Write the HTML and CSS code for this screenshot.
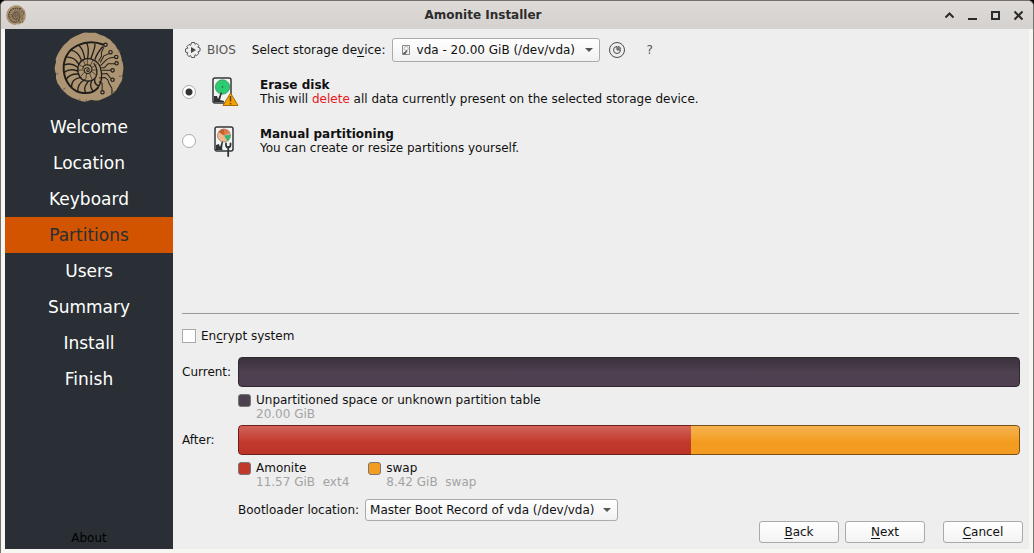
FILE: index.html
```html
<!DOCTYPE html>
<html lang="en">
<head>
<meta charset="utf-8">
<title>Amonite Installer</title>
<link rel="stylesheet" href="styles.css">
</head>
<body>
<div class="window">
  <header class="titlebar">
    <svg class="app-icon" viewBox="12 12 208 208" aria-hidden="true"><use href="#ammonite"/></svg>
    <h1 class="window-title">Amonite Installer</h1>
    <div class="window-controls">
      <button class="wc" aria-label="Roll up"><svg viewBox="0 0 11 11"><path d="M1.5 7.500 5.500 3.500 9.500 7.500"/></svg></button>
      <button class="wc" aria-label="Minimize"><svg viewBox="0 0 11 11"><path d="M1 9h9"/></svg></button>
      <button class="wc" aria-label="Maximize"><svg viewBox="0 0 11 11"><path d="M2 2h7v7H2z"/></svg></button>
      <button class="wc" aria-label="Close"><svg viewBox="0 0 11 11"><path d="M1.500 1.500l8 8M9.500 1.500l-8 8"/></svg></button>
    </div>
  </header>
  <div class="body">
    <aside class="sidebar">
      <svg class="logo" viewBox="12 12 208 208" aria-hidden="true">
        <g id="ammonite">
          <path fill="#ad9472" d="M92 17Q103 12 114 14L135 14Q143 16 150 21 162 22 170 30 180 34 186 43 195 49 199 60 208 68 210 80 213 88 213 95 219 106 218 125L215 143Q217 155 208 166 203 176 196 186 186 198 174 203 162 209 147 215 135 217 123 213L105 219Q96 219 86 215 76 210 66 207 53 202 44 191 35 184 29 173 20 163 18 150V137Q14 128 14 118 15 110 18 102 15 90 22 80 27 71 33 62 38 51 50 43 60 31 72 26 82 22 92 17z"/>
          <path fill="none" stroke="#786249" stroke-width="3" d="M18 137l7-2M38 184l8-6M105 219l4-7M190 191l-5-5M213 143l-8 1M209 69l-7 3M88 216l1-6"/>
          <g fill="none" stroke="#211f1b" stroke-linecap="round" stroke-linejoin="round">
            <path stroke-width="6" d="M160 50C138 42 108 40 84 51 54 64 38 92 41 127 44 160 66 190 98 193 116 195 132 190 142 178"/>
            <path stroke-width="4" d="M142 178C154 162 156 138 150 118 144 98 116 84 98 95 80 106 79 131 89 146 101 162 126 162 136 146 143 134 139 116 131 106"/>
            <path stroke-width="3" d="M98 121C99 107 119 105 124 118 128 131 115 139 105 133 97 126 105 115 114 119 120 124 116 131 111 129 108 127 110 124 112 124"/>
            <path stroke-width="4" d="M156 56C148 66 139 76 134 93M134 48C134 65 126 76 122 90M109 45C117 58 114 76 112 90M86 52C96 60 101 75 103 92M62 66C80 69 90 85 94 98M47 87C65 85 78 95 85 107M42 110C58 104 71 108 82 117M42 132C56 122 70 123 82 128M48 153C57 138 72 136 86 137M64 175C64 157 77 149 92 147M83 188C80 171 92 161 102 154M106 192C98 177 108 168 114 158M128 187C117 176 121 164 124 157M145 172C132 168 132 158 133 151"/>
            <path stroke-width="2" d="M111 110V93M120 112l8-16M126 117l11-7M127 125h13M126 131l12 9M118 135l7 18M109 135l-3 18M102 132l-11 12M98 125H83M99 116l-14-8M105 111l-6-15"/>
            <path stroke-width="3" d="M145 98L153 84V73L160 57M150 102L160 83 174 77M151 111L168 94 178 89 191 87M154 118H162L173 106H193M155 126H181M153 137L169 135 181 150M147 149L163 147 172 154 176 166 184 179V196M146 160L155 164V186"/>
          </g>
          <g fill="#ad9472" stroke="#211f1b" stroke-width="3.500"><circle cx="165" cy="50" r="5"/><circle cx="180" cy="72" r="5"/><circle cx="197" cy="86" r="5"/><circle cx="198" cy="105" r="5"/><circle cx="186" cy="126" r="5"/><circle cx="186" cy="154" r="5"/><circle cx="156" cy="191" r="5"/></g>
        </g>
      </svg>
      <ol class="steps">
        <li class="step">Welcome</li>
        <li class="step">Location</li>
        <li class="step">Keyboard</li>
        <li class="step current" aria-current="step">Partitions</li>
        <li class="step">Users</li>
        <li class="step">Summary</li>
        <li class="step">Install</li>
        <li class="step">Finish</li>
      </ol>
      <button class="about">About</button>
    </aside>
    <main class="content">
      <section class="page">
        <div class="device-row">
          <svg class="tool-icon" viewBox="0 0 18 18" aria-hidden="true"><path fill="none" stroke="#555" stroke-linejoin="round" d="M7.500 1h3l.5 1.800 1.700-.9 2.100 2.100-.9 1.700 2.100.8v3l-2.100.8.900 1.700-2.100 2.100-1.700-.9L10.500 16h-3l-.8-1.900-1.700.9L2.900 13l.9-1.700L1.500 10.500v-3l2.300-.8L2.900 5 5 2.900l1.700.9z" transform="translate(0 .5)"/><path fill="#444" d="M7 6v6l5-3z"/></svg>
          <span class="bios">BIOS</span>
          <label class="device-label" for="device">Select storage de<u>v</u>ice:</label>
          <div class="select-box device-box">
            <svg class="disk-icon" viewBox="0 0 10 12" aria-hidden="true"><path fill="#f7f7f7" stroke="#888" d="M1.500 1.500h7v9h-7z"/><circle cx="5.200" cy="4.500" r="2" fill="none" stroke="#aaa" stroke-width=".8"/><path stroke="#666" stroke-width="1.500" d="M2 9.500h2l2-3"/></svg>
            <select class="select device-select" id="device"><option>vda - 20.00 GiB (/dev/vda)</option></select>
          </div>
          <button class="icon-button" aria-label="Partition table"><svg class="tool-icon" viewBox="0 0 18 18"><g fill="none" stroke="#4c4c4c"><circle cx="9" cy="9" r="7.500"/><path d="M9 5.500A3.500 3.500 0 1 0 12.500 9H9z"/><path d="M10 5.500q2.500 0 2.500 2.500H10z"/></g></svg></button>
          <button class="icon-button help" aria-label="Help">?</button>
        </div>

        <div class="choice">
          <input class="radio" type="radio" name="mode" id="erase" checked>
          <svg class="choice-icon" viewBox="0 0 30 32" aria-hidden="true">
            <rect x="3" y="2" width="18" height="25" rx="2" fill="#f3f5f4" stroke="#343638" stroke-width="1.500"/>
            <circle cx="12.500" cy="11" r="7.200" fill="#2ecc71" stroke="#248b51" stroke-width=".7"/><circle cx="12.500" cy="11" r=".8" fill="#255e3d"/>
            <path fill="#303336" d="M4 20h3l1 3 3-7 1 1-2 7 4 1v1H4z"/>
            <path fill="#f5a300" stroke="#a66b0a" stroke-linejoin="round" d="M20.500 17L13 29.500h15z"/><path stroke="#59400d" stroke-width="1.500" d="M20.500 20v5.500M20.500 27v1.500"/>
          </svg>
          <label class="choice-text" for="erase"><strong>Erase disk</strong><br>This will <span class="danger">delete</span> all data currently present on the selected storage device.</label>
        </div>
        <div class="choice">
          <input class="radio" type="radio" name="mode" id="manual">
          <svg class="choice-icon" viewBox="0 0 30 32" aria-hidden="true">
            <rect x="5" y="2" width="18" height="24" rx="2" fill="#f3f5f4" stroke="#343638" stroke-width="1.500"/>
            <circle cx="14" cy="10.500" r="6.500" fill="#f3b78e" stroke="#96745d" stroke-width=".7"/><path fill="#d97b4f" d="M14 10.500V4a6.500 6.500 0 0 1 6 4z"/><path fill="#35b779" d="M14 10.500l6.500-1c.2 3-1 5.500-3 7z"/><path fill="#bf6435" d="M14 10.500L8.500 7A6.500 6.500 0 0 1 14 4z"/>
            <path fill="#303336" d="M6 20l3-1 1 3 2-6 1 1-1 7 1 1H6z"/>
            <path fill="none" stroke="#303336" stroke-width="1.800" stroke-linecap="round" d="M16 18.500v1.500q0 2.500 2.200 2.500T20.500 20v-1.500M18.200 22v9"/>
          </svg>
          <label class="choice-text" for="manual"><strong>Manual partitioning</strong><br>You can create or resize partitions yourself.</label>
        </div>

        <hr class="divider">
        <div class="encrypt"><input class="check" type="checkbox" id="encrypt"><label for="encrypt">En<u>c</u>rypt system</label></div>

        <div class="preview">
          <span class="preview-label">Current:</span>
          <div class="bar bar-free"></div>
          <ul class="legend">
            <li class="entry"><span class="swatch free"></span><span>Unpartitioned space or unknown partition table<br><span class="muted">20.00 GiB</span></span></li>
          </ul>
          <span class="preview-label">After:</span>
          <div class="bar bar-after"><span class="part root" style="width:57.87%"></span><span class="part swap"></span></div>
          <ul class="legend">
            <li class="entry"><span class="swatch root-color"></span><span>Amonite<br><span class="muted">11.57 GiB&nbsp; ext4</span></span></li>
            <li class="entry"><span class="swatch swap-color"></span><span>swap<br><span class="muted">8.42 GiB&nbsp; swap</span></span></li>
          </ul>
          <div class="boot-row">
            <label for="boot">Bootloader location:</label>
            <div class="select-box"><select class="select" id="boot"><option>Master Boot Record of vda (/dev/vda)</option></select></div>
          </div>
        </div>
      </section>
      <footer class="actions">
        <button class="button"><u>B</u>ack</button>
        <button class="button"><u>N</u>ext</button>
        <button class="button cancel"><u>C</u>ancel</button>
      </footer>
    </main>
  </div>
</div>
</body>
</html>
```
FILE: styles.css
```css
* { box-sizing: border-box; }
body {
  margin: 0;
  background: #000;
  color: #111;
  font: 12px/14px "DejaVu Sans", sans-serif;
}
button, select { font: inherit; color: inherit; }
svg { display: block; }
u { text-underline-offset: 2px; }

.window {
  display: flex;
  flex-direction: column;
  min-height: 100vh;
  border: 1px solid #77716e;
  border-bottom: 0;
  border-radius: 6px 6px 0 0;
  background: #f7f6f3;
  overflow: hidden;
}
.titlebar {
  display: grid;
  grid-template-columns: 20px 1fr 84px;
  align-items: center;
  height: 28px;
  padding: 0 9px 0 5px;
  background: linear-gradient(#dedad7, #d5d1ce);
}
.app-icon { width: 20px; height: 20px; }
.window-title { margin: 0; color: #2c2c2c; font-size: 12px; text-align: center; }
.window-controls { display: flex; justify-content: flex-end; gap: 12px; }
.wc { width: 11px; height: 11px; padding: 0; border: 0; background: none; }
.wc svg { fill: none; stroke: #2b2b2b; stroke-width: 2; }

.body { display: flex; flex: 1; padding: 0 4px 4px; }
.sidebar {
  display: flex;
  flex: 0 0 168px;
  flex-direction: column;
  align-items: center;
  padding: 3px 0;
  background: #292f34;
}
.logo { width: 70px; height: 70px; margin-bottom: 7px; }
.steps { align-self: stretch; margin: 0; padding: 0; list-style: none; }
.step { color: #fff; font-size: 17px; line-height: 36px; text-align: center; }
.step.current { background: #d35400; color: #292f34; }
.about { margin-top: auto; padding: 0 0 1px; border: 0; background: none; color: #000; }

.content { display: flex; flex: 1; flex-direction: column; min-width: 0; background: #eee; }
.page { display: flex; flex: 1; flex-direction: column; padding: 9px 9px 0; }
.device-row { display: flex; align-items: center; height: 24px; padding-left: 2px; }
.tool-icon { width: 18px; height: 18px; }
.bios { margin: 0 16px 0 5px; color: #555; }
.device-label { margin-right: 6px; }
.select-box { position: relative; }
.select {
  height: 22px;
  padding: 0 22px 0 4px;
  border: 1px solid #aaa;
  border-radius: 3px;
  appearance: none;
  background: linear-gradient(#fff, #f1f1f1);
}
.select-box::after {
  content: "";
  position: absolute;
  top: calc(50% - 2px);
  right: 7px;
  border: solid transparent;
  border-width: 4px 4px 0;
  border-top-color: #555;
}
.device-select { height: 24px; padding: 0 23px 0 24px; }
.disk-icon { position: absolute; top: 6px; left: 9px; width: 10px; height: 12px; }
.icon-button { margin-left: 8px; padding: 0; border: 0; background: none; }
.help { margin-left: 21px; color: #555; }

.choice { display: flex; align-items: center; min-height: 32px; margin-top: 14px; }
.choice + .choice { margin-top: 17px; }
.radio, .check {
  flex: none;
  width: 14px;
  height: 14px;
  margin: 0;
  border: 1px solid #aaa;
  appearance: none;
  background: #fff;
}
.radio { border-radius: 50%; }
.radio:checked { background: radial-gradient(circle, #333 0 3px, #fff 4px); }
.choice-icon { width: 30px; height: 32px; margin: 0 20px 0 14px; }
.danger { color: #e8191b; }

.divider { width: calc(100% - 1px); margin: auto 0 15px; border: 0; border-top: 1px solid #999; }
.encrypt { display: flex; align-items: center; gap: 5px; margin-bottom: 14px; }
.preview { display: grid; grid-template-columns: 56px 1fr; align-items: center; }
.bar { height: 30px; border: 1px solid #302831; border-radius: 4px; overflow: hidden; }
.bar-free { background: linear-gradient(#3b313d, #4d404f 50%, #4f4050); }
.bar-after { display: flex; border: 0; }
.part { border: 1px solid #785016; }
.part.root { border-color: #6d2019; border-right: 0; border-radius: 4px 0 0 4px; background: linear-gradient(#d26359, #c0392b 60%, #bb3428); }
.part.swap { flex: 1; border-left: 0; border-radius: 0 4px 4px 0; background: linear-gradient(#f5b350, #f39c1f 60%); }
.legend { display: flex; grid-column: 2; gap: 19px; margin: 6px 0 4px; padding: 0; list-style: none; }
.entry { display: flex; gap: 5px; }
.swatch { flex: none; width: 13px; height: 13px; margin-top: 1px; border: 1px solid #777; border-radius: 3px; }
.free { background: #4d404f; }
.root-color { background: #c0392b; }
.swap-color { background: #f39c1f; }
.muted { color: #a3a3a3; }
.boot-row { display: flex; grid-column: 2; align-items: center; gap: 6px; margin-top: 6px; }

.actions { display: flex; justify-content: flex-end; gap: 6px; padding: 0 6px 6px; }
.button {
  width: 80px;
  height: 22px;
  padding: 0;
  border: 1px solid #aaa;
  border-radius: 3px;
  background: linear-gradient(#fff, #f3f3f3);
}
.cancel { margin-left: 12px; }
```
